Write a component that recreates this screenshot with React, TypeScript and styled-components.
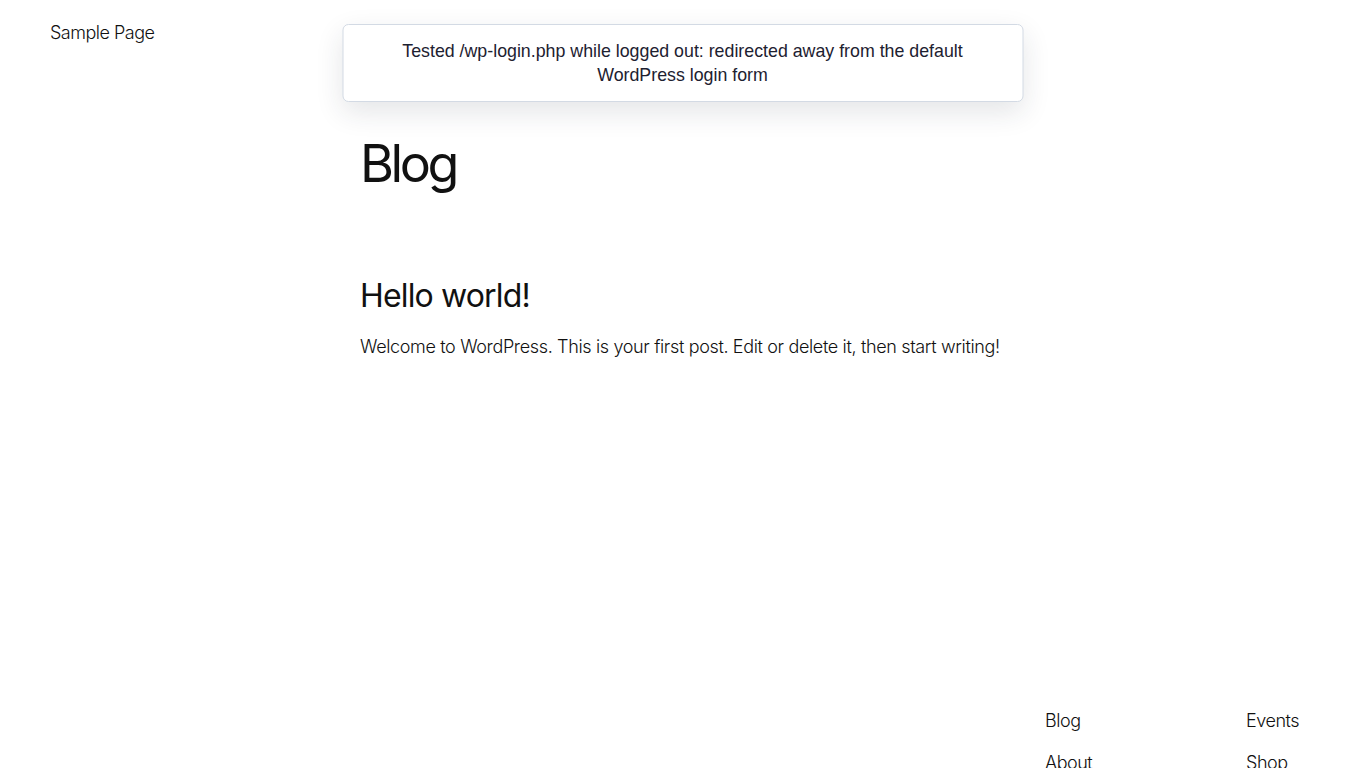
import React from "react";
import styled, { createGlobalStyle } from "styled-components";

const Global = createGlobalStyle`
  html, body { margin: 0; padding: 0; background: #fff; }
  body { font-family: Inter, "Noto Sans", sans-serif; color: #111; }
  * { box-sizing: border-box; }
`;

const Page = styled.div`
  position: relative;
  min-height: 768px;
  display: flex;
  flex-direction: column;
`;

const Header = styled.header`
  display: flex;
  padding: 22px 50px 0;
`;

const NavLink = styled.a`
  font-size: 18px;
  font-weight: 300;
  letter-spacing: -0.5px;
  color: #111;
  text-decoration: none;
`;

const Toast = styled.div`
  position: absolute;
  top: 24px;
  left: 50%;
  transform: translateX(-50%);
  width: 681px;
  height: 78px;
  padding: 14px 20px;
  background: #fff;
  border: 1px solid #d3dae4;
  border-radius: 6px;
  box-shadow: 0 10px 28px rgba(30, 40, 60, 0.12);
  font-family: "Liberation Sans", Arial, sans-serif;
  font-size: 17.8px;
  line-height: 24px;
  color: #1d2130;
  text-align: center;
`;

const Main = styled.main`
  width: 645px;
  margin: 0 auto;
  padding-top: 90px;
`;

const Title = styled.h1`
  margin: 0;
  font-size: 52px;
  font-weight: 400;
  letter-spacing: -3.4px;
  line-height: 1.2;
`;

const Post = styled.article`
  margin-top: 82px;
`;

const PostTitle = styled.h2`
  margin: 0;
  font-size: 32px;
  font-weight: 400;
  letter-spacing: -0.85px;
  line-height: 1.2;
`;

const Excerpt = styled.p`
  margin: 17px 0 0;
  font-size: 18px;
  font-weight: 300;
  letter-spacing: -0.35px;
  line-height: 1.5;
`;

const Footer = styled.footer`
  margin-top: auto;
  display: flex;
  justify-content: flex-end;
  padding: 0 66px 0 0;
  height: 66px;
  overflow: hidden;
`;

const FooterCols = styled.div`
  display: grid;
  grid-template-columns: 201px auto;
  row-gap: 21px;
  padding-top: 8px;
`;

export default function App() {
  return (
    <Page>
      <Global />
      <Header>
        <NavLink href="#">Sample Page</NavLink>
      </Header>
      <Toast>
        Tested /wp-login.php while logged out: redirected away from the default WordPress login form
      </Toast>
      <Main>
        <Title>Blog</Title>
        <Post>
          <PostTitle>Hello world!</PostTitle>
          <Excerpt>
            Welcome to WordPress. This is your first post. Edit or delete it, then start writing!
          </Excerpt>
        </Post>
      </Main>
      <Footer>
        <FooterCols>
          <NavLink href="#">Blog</NavLink>
          <NavLink href="#">Events</NavLink>
          <NavLink href="#">About</NavLink>
          <NavLink href="#">Shop</NavLink>
        </FooterCols>
      </Footer>
    </Page>
  );
}
